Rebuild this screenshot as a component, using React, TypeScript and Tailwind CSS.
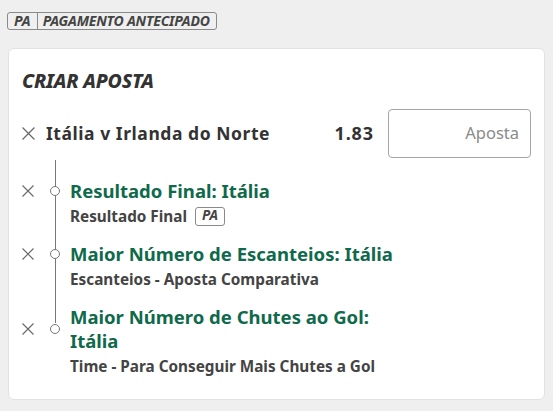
const selections = [
  {
    title: "Resultado Final: Itália",
    market: "Resultado Final",
    pa: true,
  },
  {
    title: "Maior Número de Escanteios: Itália",
    market: "Escanteios - Aposta Comparativa",
    pa: false,
  },
  {
    title: "Maior Número de Chutes ao Gol: Itália",
    market: "Time - Para Conseguir Mais Chutes a Gol",
    pa: false,
  },
] as const;

// thin close cross
function Cross({ size, className = "" }: { size: number; className?: string }): JSX.Element {
  return (
    <svg width={size} height={size} viewBox="0 0 12 12" className={`shrink-0 text-[#666] ${className}`}>
      <path d="M0.5 0.5 L11.5 11.5 M11.5 0.5 L0.5 11.5" stroke="currentColor" strokeWidth="1.1" fill="none" />
    </svg>
  );
}

// small boxed label used for "PA"
function PaTag(): JSX.Element {
  return (
    <span className="inline-flex h-[19px] items-center rounded-[3px] border border-[#8a8a8a] bg-white px-[6px] text-[13.5px] font-bold italic leading-none text-[#444]">
      PA
    </span>
  );
}

export default function App(): JSX.Element {
  return (
    <div
      className="flex h-[411px] w-[553px] flex-col items-start overflow-hidden bg-[#efefef] px-2 pt-3"
      style={{ fontFamily: '"Noto Sans", "Open Sans", sans-serif' }}
    >
      {/* top badge */}
      <div className="ml-[-1px] flex h-[18px] items-center rounded-[3px] border border-[#8a8a8a] text-[14px] font-bold italic leading-none text-[#444]">
        <span className="px-[6px]">PA</span>
        <span className="h-full border-l border-[#8a8a8a]" />
        <span className="pl-[5px] pr-[6px] tracking-[-0.2px]">PAGAMENTO ANTECIPADO</span>
      </div>

      {/* card */}
      <div className="mt-[18px] h-[352px] w-[537px] shrink-0 rounded-[6px] border border-[#e2e2e2] bg-white px-[13px] pt-[20px]">
        <h2 className="text-[19.5px] font-extrabold italic leading-[24px] tracking-[-0.2px] text-[#333]">
          CRIAR APOSTA
        </h2>

        {/* event row */}
        <div className="mt-[16px] flex h-[49px] items-center">
          <Cross size={13} />
          <span className="ml-[11px] flex-1 text-[17.5px] font-bold tracking-[0.55px] text-[#333]">
            Itália v Irlanda do Norte
          </span>
          <span className="mr-[14px] text-[18px] font-bold tracking-[0.9px] text-[#333]">1.83</span>
          <div className="flex h-[49px] w-[143px] items-center justify-end rounded-[4px] border border-[#a5a5a5] px-[11px] text-[16.5px] text-[#8a8a8a]">
            Aposta
          </div>
        </div>

        {/* selections with timeline */}
        <div className="relative flex flex-col gap-[15px] pt-[21px]">
          <div className="absolute left-[33px] top-[2px] h-[163px] w-px bg-[#777]" />
          {selections.map((s) => (
            <div key={s.title} className="w-[383px] pl-[48px]">
              <div className="relative text-[18.5px] font-bold leading-[24px] text-[#0f6a4b]">
                <Cross size={12} className="absolute left-[-48px] top-1/2 -translate-y-1/2" />
                <span className="absolute left-[-20px] top-1/2 h-[10px] w-[10px] -translate-y-1/2 rounded-full border border-[#777] bg-white" />
                {s.title}
              </div>
              <div className="mt-[2px] flex items-center gap-[8px] text-[15.3px] font-bold leading-[22px] text-[#444]">
                {s.market}
                {s.pa && <PaTag />}
              </div>
            </div>
          ))}
        </div>
      </div>
    </div>
  );
}
